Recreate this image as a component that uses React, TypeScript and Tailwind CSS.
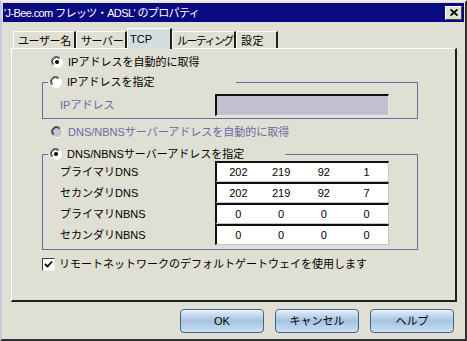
import React from "react";

const font = "font-['Liberation_Sans','Noto_Sans_CJK_JP',sans-serif]";

function Radio({ checked, disabled }: { checked?: boolean; disabled?: boolean }) {
  return (
    <svg width="12" height="12" viewBox="0 0 12 12" className="shrink-0">
      <circle cx="6" cy="6" r="5.5" fill={disabled ? "#c4c4d2" : "#ffffff"} />
      <path d="M1.8 9.2 A5 5 0 0 1 9.2 1.8" fill="none" stroke="#7a7a7a" strokeWidth="1" />
      <path d="M2.6 8.4 A4 4 0 0 1 8.4 2.6" fill="none" stroke="#000000" strokeWidth="1" />
      <path d="M10.2 2.8 A5 5 0 0 1 2.8 10.2" fill="none" stroke="#ffffff" strokeWidth="1" />
      {checked && <circle cx="6" cy="6" r="2" fill="#000000" />}
    </svg>
  );
}

function Checkbox() {
  return (
    <div className="w-[13px] h-[13px] shrink-0 bg-white border-t border-l border-t-[#404040] border-l-[#404040] border-r border-b border-r-[#f0f0f0] border-b-[#f0f0f0] flex items-center justify-center">
      <svg width="9" height="9" viewBox="0 0 9 9">
        <path d="M1 4 L3.5 6.5 L8 1.5" fill="none" stroke="#000" strokeWidth="1.8" />
      </svg>
    </div>
  );
}

type Tab = { label: string; width: string; tracking: string; active?: boolean };

const tabs: Tab[] = [
  { label: "ユーザー名", width: "w-[63px]", tracking: "tracking-[-0.4px]" },
  { label: "サーバー", width: "w-[51px]", tracking: "tracking-[-0.4px]" },
  { label: "TCP", width: "w-[45px]", tracking: "tracking-normal", active: true },
  { label: "ルーティング", width: "w-[64px]", tracking: "tracking-[-1.6px]" },
  { label: "設定", width: "w-[42px]", tracking: "tracking-[0.5px]" },
];

const dnsRows = [
  { label: "プライマリDNS", values: ["202", "219", "92", "1"] },
  { label: "セカンダリDNS", values: ["202", "219", "92", "7"] },
  { label: "プライマリNBNS", values: ["0", "0", "0", "0"] },
  { label: "セカンダリNBNS", values: ["0", "0", "0", "0"] },
];

function WinButton({ children }: { children: React.ReactNode }) {
  return (
    <button
      type="button"
      className="w-[84px] h-[24px] rounded-[4px] border border-[#3f6686] bg-gradient-to-b from-[#e4eefa] via-[#a4c2e2] to-[#cddff2] text-[11px] leading-[14px] text-black shadow-[inset_0_1px_0_#f4f8ff]"
    >
      {children}
    </button>
  );
}

export default function App() {
  return (
    <div
      className={`w-[467px] h-[341px] bg-[#dfdfd3] border-t-2 border-l-2 border-t-[#eeeee6] border-l-[#c8c8dc] border-r-2 border-b-2 border-r-[#303030] border-b-[#303030] p-px flex flex-col text-[11px] leading-[14px] text-black ${font}`}
    >
      {/* タイトルバー */}
      <div className="h-[19px] bg-[#0a0a80] flex items-center justify-between pl-[1px] pr-[2px]">
        <span className="text-white text-[11px] leading-[14px] whitespace-nowrap tracking-[-0.6px]">
          'J-Bee.com フレッツ・ADSL' のプロパティ
        </span>
        <div className="w-[17px] h-[14px] bg-[#dfdfd3] border-t border-l border-t-white border-l-white border-r border-b border-r-[#404040] border-b-[#404040] flex items-center justify-center">
          <svg width="8" height="7" viewBox="0 0 8 7">
            <path d="M0.5 0.5 L7.5 6.5 M7.5 0.5 L0.5 6.5" stroke="#000" strokeWidth="1.8" />
          </svg>
        </div>
      </div>

      {/* タブ */}
      <div className="mt-[6px] pl-[10px] flex items-end h-[20px] relative z-10">
        {tabs.map((t) =>
          t.active ? (
            <div
              key={t.label}
              className={`${t.width} h-[21px] -mb-px bg-[#d3dfdf] border-t border-l border-t-white border-l-white border-r-2 border-r-[#202020] pl-[2px] pt-[3px] whitespace-nowrap`}
            >
              {t.label}
            </div>
          ) : (
            <div
              key={t.label}
              className={`${t.width} ${t.tracking} h-[17px] border-t border-l border-t-white border-l-white border-r-2 border-r-[#202020] pl-[4px] pt-[2px] whitespace-nowrap overflow-hidden`}
            >
              {t.label}
            </div>
          )
        )}
      </div>

      {/* タブパネル */}
      <div className="ml-[8px] w-[446px] h-[254px] border-t border-l border-t-white border-l-white border-r-2 border-b-2 border-r-[#202020] border-b-[#202020] pl-[30px] pt-[5px] flex flex-col">
        <div className="h-[16px] pl-[9px] flex items-center gap-[5px]">
          <Radio checked />
          <span>IPアドレスを自動的に取得</span>
        </div>

        <fieldset className="mt-[4px] w-[376px] border border-[#6a6aa6] px-[5px] pb-[2px]">
          <legend className="w-[188px] h-[16px] pl-[2px] flex items-center gap-[5px]">
            <Radio />
            <span>IPアドレスを指定</span>
          </legend>
          <div className="mt-[4px] pl-[12px] flex items-center h-[22px]">
            <span className="w-[155px] text-[#6a6aa6]">IPアドレス</span>
            <div className="w-[174px] h-[22px] bg-[#c0c0d0] border-t-2 border-l-2 border-t-[#101010] border-l-[#101010] border-r border-b border-r-[#e8e8ee] border-b-[#e8e8ee]" />
          </div>
        </fieldset>

        <div className="mt-[5px] h-[16px] pl-[9px] flex items-center gap-[5px] text-[#6a6aa6]">
          <Radio disabled />
          <span>DNS/NBNSサーバーアドレスを自動的に取得</span>
        </div>

        <fieldset className="mt-[7px] w-[376px] border border-[#6a6aa6] px-[5px] pb-[4px]">
          <legend className="w-[237px] h-[14px] pl-[2px] flex items-center gap-[5px]">
            <Radio checked />
            <span>DNS/NBNSサーバーアドレスを指定</span>
          </legend>
          <div className="flex flex-col">
            {dnsRows.map((row) => (
              <div key={row.label} className="pl-[12px] flex items-center h-[21px]">
                <span className="w-[155px]">{row.label}</span>
                <div className="w-[174px] h-[21px] bg-white border-t-2 border-l-2 border-t-[#101010] border-l-[#101010] border-r border-b border-r-[#c4c4cc] border-b-[#c4c4cc] grid grid-cols-4 items-center">
                  {row.values.map((v, i) => (
                    <span key={i} className="text-center">
                      {v}
                    </span>
                  ))}
                </div>
              </div>
            ))}
          </div>
        </fieldset>

        <div className="mt-[7px] h-[14px] flex items-center gap-[4px]">
          <Checkbox />
          <span>リモートネットワークのデフォルトゲートウェイを使用します</span>
        </div>
      </div>

      {/* ボタン */}
      <div className="mt-[7px] pr-[10px] flex justify-end gap-[11px]">
        <WinButton>OK</WinButton>
        <WinButton>キャンセル</WinButton>
        <WinButton>ヘルプ</WinButton>
      </div>
    </div>
  );
}
